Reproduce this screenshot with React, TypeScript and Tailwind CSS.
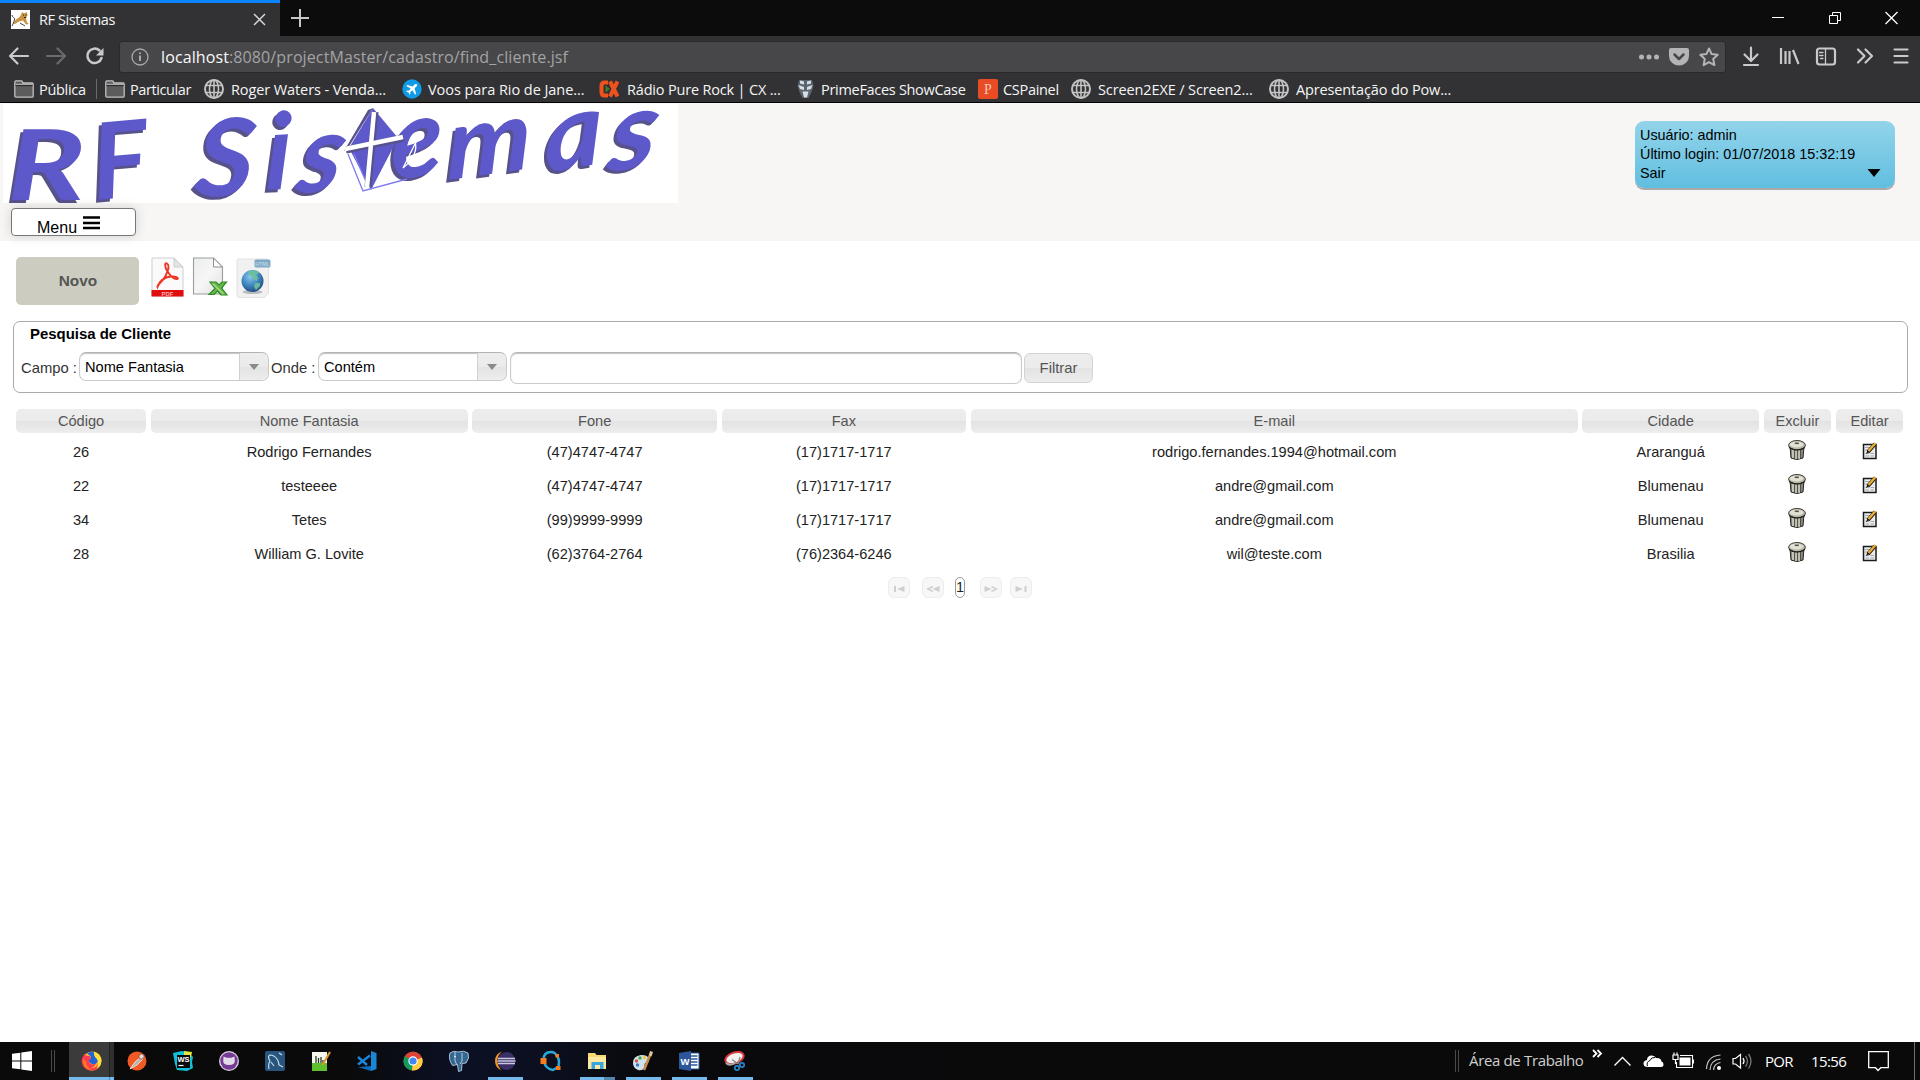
import React from "react";

type Kids = { children: React.ReactNode };

const ui = "font-['Open_Sans',sans-serif]";

/* ---------- Browser chrome icons ---------- */

const Globe = () => (
  <svg width="20" height="20" viewBox="0 0 20 20" fill="none" stroke="#c3c3c4" strokeWidth="1.6" className="shrink-0">
    <circle cx="10" cy="10" r="9" strokeWidth="2" />
    <ellipse cx="10" cy="10" rx="4.5" ry="9" />
    <path d="M10 1v18M2 6.5h16M2 13.5h16" />
  </svg>
);

const Folder = () => (
  <svg width="20" height="18" viewBox="0 0 20 18" className="shrink-0">
    <path d="M.8 16V2.2C.8 1.3 1.3.8 2 .8h5.200c.7 0 1 .3 1.200.9l.4 1.300h9.200c.8 0 1.200.4 1.200 1.200V16c0 .8-.4 1.200-1.200 1.200H2c-.8 0-1.200-.4-1.200-1.200z" fill="#5c5c5d" stroke="#c0c0c0" strokeWidth="1.3" />
    <path d="M1.500 5.500h17" stroke="#2c2c2e" strokeWidth="1.400" />
    <path d="M1.500 4.300h17" stroke="#c0c0c0" strokeWidth="1" />
  </svg>
);

const Plane = () => (
  <svg width="20" height="20" viewBox="0 0 20 20" className="shrink-0">
    <circle cx="10" cy="10" r="9.700" fill="#0f9be8" />
    <path d="M14.800 5.200c-.8-.7-1.800-.1-2.500.6l-1.500 1.600-5.500-1.500-1 1 4.400 2.700-2 2.200-1.700-.2-.8.8 2.300 1.100 1.100 2.300.8-.8-.2-1.700 2.200-2 2.700 4.400 1-1-1.500-5.500 1.600-1.500c.7-.7 1.300-1.700.6-2.500z" fill="#fff" />
  </svg>
);

const Cx = () => (
  <svg width="20" height="20" viewBox="0 0 20 20" className="shrink-0">
    <path d="M9 3.500H5.500Q2.500 3.500 2.500 7v6q0 3.500 3 3.500H9" stroke="#f0521e" strokeWidth="4" fill="none" />
    <path d="M11 2.500l7.500 15M18.500 2.500l-7.500 15" stroke="#f0521e" strokeWidth="4" />
    <path d="M6.500 6.500l4.500 3.500-4.500 3.500z" fill="#3f7d2c" />
  </svg>
);

const Prime = () => (
  <svg width="17" height="20" viewBox="0 0 17 20" className="shrink-0">
    <path d="M2 1h13l1.500 6-2 6-3 6h-6l-3-6-2-6z" fill="#5a6570" />
    <path d="M3 1.500l4 1v3l-4-1zM14 1.500l-4 1v3l4-1zM1.500 6L7 8v3L3 10zM15.500 6L10 8v3l4-1zM5.500 12.500h6l-1.500 6H7z" fill="#d8dfe6" />
  </svg>
);

const PBox = () => (
  <span className="flex h-5 w-5 shrink-0 items-center justify-center rounded-[2px] bg-[#e94b25] font-['Liberation_Serif',serif] text-[14px] text-[#f8c9b8]">P</span>
);

const Tomcat = () => (
  <svg width="19" height="19" viewBox="0 0 19 19">
    <path d="M0 0h19v19H0z" fill="#fff" />
    <path d="M10 5l1-3 2 1.500 2.500-1.500 1 3-1.500 3.500 1 4 2 1.500-3 .5-3-4-4 1-4 2.500-2-.5 3-4 3-2z" fill="#c99440" />
    <path d="M1 5c1 4 3 1.500 2.500 5L2 14l-1 2M9 13l5 3" stroke="#333" strokeWidth=".9" fill="none" />
    <path d="M12 5h1M14.500 5h1M13 7.500h2" stroke="#222" strokeWidth="1" />
  </svg>
);

const TabBar = () => (
  <div className="flex h-9 bg-[#0c0c0c]">
    <div className="flex w-[280px] items-center border-t-[3px] border-[#0a84ff] bg-[#323234] pl-[11px] pr-3.5">
      <Tomcat />
      <span className="ml-[9px] flex-1 text-[14.500px] tracking-[-0.4px] text-[#f5f5f6]">RF Sistemas</span>
      <svg width="13" height="13" viewBox="0 0 13 13" stroke="#d7d7d8" strokeWidth="1.500"><path d="M1 1l11 11M12 1L1 12" /></svg>
    </div>
    <div className="flex flex-1 items-center pl-[11px]">
      <svg width="18" height="18" viewBox="0 0 18 18" stroke="#c8c8c8" strokeWidth="2"><path d="M9 0v18M0 9h18" /></svg>
    </div>
    <svg width="150" height="36" viewBox="0 0 150 36" fill="none" stroke="#fff" strokeWidth="1" className="mr-0.5">
      <path d="M4 17.500h12" />
      <path d="M61.500 15.500h8v8h-8zM64.500 15v-2.500h8v8H70" />
      <path d="M117.500 12l12 12M129.500 12l-12 12" strokeWidth="1.300" />
    </svg>
  </div>
);

const NavBar = () => (
  <div className="flex h-[41px] items-center bg-[#323234]">
    <svg width="119" height="41" viewBox="0 0 119 41" fill="none" strokeWidth="2.200" strokeLinecap="round" strokeLinejoin="round">
      <path d="M28 20H10M17.500 12.500L10 20l7.500 7.500" stroke="#c9c9ca" />
      <path d="M47 20h18M57.500 12.500L65 20l-7.500 7.500" stroke="#6b6b6d" />
      <path d="M99.500 14.500A7.200 7.200 0 1 0 101.500 22" stroke="#c9c9ca" strokeWidth="2.500" />
      <path d="M103.500 12v7.500h-7.500z" fill="#c9c9ca" />
    </svg>
    <div className={`flex h-[32px] w-[1607px] items-center rounded-[3px] border border-[#2a2a2c] bg-[#474749] pl-[11px] pr-[6px] ${ui}`}>
      <svg width="18" height="18" viewBox="0 0 18 18" fill="none" stroke="#a9a9ab" strokeWidth="1.300">
        <circle cx="9" cy="9" r="8" /><path d="M9 7.500v5.500M9 4.500v1.600" strokeWidth="2" />
      </svg>
      <span className="ml-[12px] flex-1 whitespace-nowrap text-[16px] tracking-[0.110px] text-[#a3a3a5]"><span className="text-[#f9f9fa]">localhost</span>:8080/projectMaster/cadastro/find_cliente.jsf</span>
      <svg width="84" height="30" viewBox="0 0 84 30" fill="#b4b4b6">
        <circle cx="6.500" cy="15" r="2.500" /><circle cx="14" cy="15" r="2.500" /><circle cx="21.500" cy="15" r="2.500" />
        <path d="M36 6h16q2 0 2 2v6a10 9.500 0 0 1-20 0V8q0-2 2-2z" />
        <path d="M39.500 12.500l4.500 4.500 4.500-4.500" fill="none" stroke="#474749" strokeWidth="2.500" strokeLinecap="round" strokeLinejoin="round" />
        <path d="M74 6.500l2.600 5.600 6.100.7-4.500 4.200 1.200 6.100-5.400-3-5.400 3 1.200-6.100-4.500-4.200 6.100-.7z" fill="none" stroke="#b4b4b6" strokeWidth="2" strokeLinejoin="round" />
      </svg>
    </div>
    <svg width="194" height="41" viewBox="0 0 194 41" fill="none" stroke="#c9c9ca" strokeWidth="2.200" strokeLinecap="round" strokeLinejoin="round">
      <path d="M25 11.500v13M18.500 18.500L25 25l6.500-6.500M18 29h14" />
      <path d="M55 12v16M59.500 15v13M63.500 15v13M67 14l5.500 14" strokeWidth="2.200" strokeLinecap="butt" />
      <rect x="91" y="12.500" width="18" height="16" rx="2.500" />
      <path d="M99.500 13v15M93.500 16.500h3.500M93.500 19.500h3.500M94.500 22.500h2.500" strokeWidth="1.300" />
      <path d="M132 13.500l6.500 6.500-6.500 6.500M139.500 13.500l6.500 6.500-6.500 6.500" />
      <path d="M168.500 13.500h13M168.500 20h13M168.500 26.500h13" />
    </svg>
  </div>
);

const Mark = ({ icon, width, gap, text, track }: { icon: React.ReactNode; width: string; gap: string; text: string; track?: string }) => (
  <div className={`flex items-center ${width}`}>
    {icon}
    <span className={`whitespace-nowrap pt-px ${gap} ${track ?? "tracking-[-0.3px]"}`}>{text}</span>
  </div>
);

const Bookmarks = () => (
  <div className={`flex h-[26px] items-center border-b border-black bg-[#323234] pb-px pl-[14px] text-[14.500px] text-[#f5f5f6] ${ui}`}>
    <Mark icon={<Folder />} width="w-[82px]" gap="ml-[5px]" text="Pública" />
    <div className="h-5 w-[9px] border-l border-[#6a6a6c]" />
    <Mark icon={<Folder />} width="w-[99px]" gap="ml-[5px]" text="Particular" track="tracking-[-0.4px]" />
    <Mark icon={<Globe />} width="w-[198px]" gap="ml-[7px]" text="Roger Waters - Venda..." track="tracking-[-0.100px]" />
    <Mark icon={<Plane />} width="w-[197px]" gap="ml-[6px]" text="Voos para Rio de Jane..." track="tracking-[-0.050px]" />
    <Mark icon={<Cx />} width="w-[198px]" gap="ml-[8px]" text="Rádio Pure Rock | CX ..." track="tracking-[-0.180px]" />
    <Mark icon={<Prime />} width="w-[181px]" gap="ml-[7px]" text="PrimeFaces ShowCase" />
    <Mark icon={<PBox />} width="w-[93px]" gap="ml-[5px]" text="CSPainel" />
    <Mark icon={<Globe />} width="w-[198px]" gap="ml-[7px]" text="Screen2EXE / Screen2..." track="tracking-[-0.120px]" />
    <Mark icon={<Globe />} width="w-[190px]" gap="ml-[7px]" text="Apresentação do Pow..." track="tracking-[-0.140px]" />
  </div>
);

/* ---------- Page header ---------- */

const letters = [
  { c: "R", t: "translate(4 96) scale(1.330 1)", s: 98 },
  { c: "F", t: "translate(92 96) rotate(-5) scale(1 1)", s: 106 },
  { c: "S", t: "translate(190 92) skewX(-5) scale(1.050 1)", s: 108 },
  { c: "i", t: "translate(262 86) rotate(-3) skewX(-4)", s: 106 },
  { c: "s", t: "translate(291 89) rotate(-3) skewX(-14)", s: 108 },
  { c: "e", t: "translate(388 77) rotate(-10) skewX(-10)", s: 108 },
  { c: "m", t: "translate(444 76) rotate(-8) skewX(-8) scale(1.100 1)", s: 98 },
  { c: "a", t: "translate(542 69) rotate(-10) skewX(-10) scale(1.100 1)", s: 102 },
  { c: "s", t: "translate(603 68) rotate(-8) skewX(-16) scale(1.120 1)", s: 106 },
];

const Letters = ({ color }: { color: string }) => (
  <g fill={color} fontFamily="Lato, sans-serif" fontStyle="italic" fontWeight="700">
    {letters.map((l, i) => (
      <text key={i} transform={l.t} fontSize={l.s}>{l.c}</text>
    ))}
  </g>
);

const Logo = () => (
  <svg width="675" height="99" viewBox="0 0 675 99" className="ml-[3px] mt-px overflow-visible bg-white">
    <g transform="translate(-3 3)"><Letters color="#57528a" /></g>
    <Letters color="#5d59cb" />
    <path d="M370 4l25 30-27 52-22-42z" fill="#5d59cb" />
    <path d="M370 4l-5 2-24 41 4-3z" fill="#57528a" />
    <path d="M345 50l15 37 44-12M351 50l13 30" fill="none" stroke="#7f7cf0" strokeWidth="1.300" />
    <path d="M372 8l-7 75M343 46l58-12" stroke="#57528a" strokeWidth="7" fill="none" />
    <path d="M371 8l-7 75M342 45l58-12" stroke="#fff" strokeWidth="4.500" fill="none" />
    <path d="M412 37q4 14-12 27l14-28" fill="none" stroke="#fff" strokeWidth="1.300" />
  </svg>
);

const Header = () => (
  <header className="flex h-[138px] justify-between bg-[#f7f6f5] text-black">
    <div className="flex flex-col">
      <Logo />
      <button className="ml-[11px] mt-[5px] flex h-[28px] w-[125px] items-start rounded-[4px] border border-[#777] bg-white pl-[25px] pt-[7px] text-[16px] leading-6 shadow-[0_0_12px_rgba(0,0,0,0.15)]">
        <span>Menu</span>
        <svg width="18" height="14" viewBox="0 0 18 14" className="ml-[6px]"><path d="M0 1.500h17M0 7h17M0 12h17" stroke="#000" strokeWidth="2.600" /></svg>
      </button>
    </div>
    <div className="mr-[25px] mt-[18px] flex h-[67px] w-[260px] items-end justify-between rounded-[9px] bg-linear-to-b from-[#92d4ea] to-[#60bee0] pb-[5px] pl-[5px] pr-[14px] shadow-[0_2px_0_#aaa]">
      <div className="text-[14.400px] leading-[19px]">
        <p>Usuário: admin</p>
        <p>Último login: 01/07/2018 15:32:19</p>
        <p>Sair</p>
      </div>
      <svg width="14" height="8" viewBox="0 0 14 8" className="mb-[6px]"><path d="M.5 0h13L7 8z" /></svg>
    </div>
  </header>
);

/* ---------- Toolbar ---------- */

const PdfIcon = () => (
  <svg width="33" height="41" viewBox="0 0 33 41">
    <path d="M1 1h22l9 9v29H1z" fill="#fafafa" stroke="#cfcfcf" />
    <path d="M23 1v9h9z" fill="#e4e4e4" stroke="#c4c4c4" strokeWidth=".8" />
    <path d="M.5 33h32v6.500H.5z" fill="#e00f0f" />
    <path d="M6.500 30c-1-2 5-5 8-11s4-11 1.500-12.500-2.500 3.500.5 8 7 8 9.500 7.500-1-3-6-2.500-11 3-13.500 10.500z" fill="none" stroke="#ee3524" strokeWidth="1.900" />
    <text x="16.500" y="38.500" textAnchor="middle" fontSize="6" fontWeight="700" fontFamily="Liberation Sans, sans-serif" fill="#ffb0b0">PDF</text>
  </svg>
);

const XlsIcon = () => (
  <svg width="37" height="41" viewBox="0 0 37 41">
    <defs><linearGradient id="sheet" x1="0" y1="0" x2="1" y2="1"><stop offset="0" stopColor="#eceded" /><stop offset=".5" stopColor="#f6f6f6" /><stop offset="1" stopColor="#dedfe0" /></linearGradient></defs>
    <path d="M1.500 1h20l9 9v27h-29z" fill="url(#sheet)" stroke="#9a9c9e" strokeWidth="1.100" />
    <path d="M21.500 1v9h9z" fill="#fbfbfb" stroke="#8d9092" strokeWidth="1" />
    <path d="M18 25h6l3 3 3-3h4.500l-5 6 5.500 7h-6l-3.500-4-3.500 3.500h-5l6-6z" fill="#67b84a" stroke="#2f8a22" strokeWidth="1.200" />
    <path d="M20.500 26.500l11 10.500" stroke="#a5d98c" strokeWidth="1.500" />
  </svg>
);

const HtmlIcon = () => (
  <svg width="36" height="42" viewBox="0 0 36 42">
    <defs><radialGradient id="ocean" cx=".4" cy=".3" r=".8"><stop offset="0" stopColor="#8cc9ee" /><stop offset=".5" stopColor="#3f86bf" /><stop offset="1" stopColor="#1b3f70" /></radialGradient></defs>
    <path d="M2 1h29q1.500 0 1.500 1.500V35l-4 4.500H3q-2 0-2-2V2z" fill="#f1f1f2" stroke="#e2e2e2" />
    <ellipse cx="16.500" cy="34" rx="10" ry="2" fill="#b9bcc0" />
    <circle cx="16.500" cy="23" r="11" fill="url(#ocean)" />
    <path d="M13 13q6-2 10 1l-1 2-3 1 3 2-1 4-4-2-2-3-3-3zM19 25l5 0 0 3-4 4-2-3z" fill="#6fc09a" opacity=".9" />
    <rect x="18.500" y="1.500" width="16" height="8" rx="1.500" fill="#7fa9c4" />
    <text x="26.500" y="7.500" textAnchor="middle" fontSize="5.200" fontWeight="700" fontFamily="Liberation Sans, sans-serif" fill="#b9d2e2">HTML</text>
  </svg>
);

const Toolbar = () => (
  <div className="flex pl-4 pt-4">
    <button className="h-12 w-[123px] rounded-[5px] bg-[#cdccc0] pl-px text-[15.400px] font-bold text-[#555]">Novo</button>
    <div className="ml-[12px] flex">
      <PdfIcon />
      <div className="ml-[8px]"><XlsIcon /></div>
      <div className="ml-[7px] mt-px"><HtmlIcon /></div>
    </div>
  </div>
);

/* ---------- Search panel ---------- */

const glossy = "bg-[linear-gradient(#ededed_0%,#ebebeb_50%,#e3e3e3_51%,#ededed_100%)]";

const Select = ({ value, className }: { value: string; className: string }) => (
  <div className={`flex h-[29px] overflow-hidden rounded-[7px] border border-[#cbcbcb] border-t-[#b4b4b4] bg-white shadow-[inset_0_1px_1px_#c4c4c4] ${className}`}>
    <span className="flex-1 pl-[5px] pt-px text-[14.600px] leading-[27px] text-black">{value}</span>
    <span className={`flex w-[29px] items-center justify-center border-l border-[#d0d0d0] ${glossy}`}>
      <svg width="10" height="6" viewBox="0 0 10 6"><path d="M0 0h10L5 6z" fill="#8a8a8a" /></svg>
    </span>
  </div>
);

const Search = () => (
  <section className="ml-[13px] mt-4 h-[72px] w-[1895px] rounded-[7px] border border-[#aaa] text-[#333]">
    <h2 className="pl-4 pt-[3px] text-[14.950px] font-bold leading-[18px] text-black">Pesquisa de Cliente</h2>
    <div className="mt-[9px] flex pl-[7px] text-[14.800px]">
      <span className="w-[58px] whitespace-nowrap pt-px leading-[30px]">Campo :</span>
      <Select value="Nome Fantasia" className="w-[190px]" />
      <span className="ml-[2px] w-[47px] whitespace-nowrap pt-px leading-[30px]">Onde :</span>
      <Select value="Contém" className="w-[189px]" />
      <div className="ml-[3px] h-8 w-[512px] rounded-[7px] border border-[#cbcbcb] border-t-[#b4b4b4] bg-white shadow-[inset_0_1px_1px_#c4c4c4]" />
      <button className={`ml-[2px] mt-px h-[30px] w-[69px] rounded-[6px] border border-[#d3d3d3] pt-px text-[#555] ${glossy}`}>Filtrar</button>
    </div>
  </section>
);

/* ---------- Results table ---------- */

const Trash = () => (
  <svg width="18" height="20" viewBox="0 0 18 20">
    <path d="M2 6h14l-1 12q-6 3-12 0z" fill="#8b897e" stroke="#26251f" strokeWidth="1" />
    <path d="M5 8v10M8 9v10M11 9v10" stroke="#d8d6ca" strokeWidth="1.500" />
    <path d="M6.600 9v10M9.600 9v10M12.500 8v10.500" stroke="#4b4a42" strokeWidth=".9" />
    <ellipse cx="9" cy="5.200" rx="8.400" ry="4.700" fill="#b9b7a8" stroke="#2b2a25" strokeWidth=".9" />
    <ellipse cx="8.500" cy="4.500" rx="6.800" ry="3" fill="#e2e0d3" />
    <path d="M6.800 2.500h4v1.600h-4z" fill="#55534b" />
    <path d="M1 7.500q8 5 16 0" stroke="#1f1e1a" fill="none" strokeWidth="1.100" />
  </svg>
);

const Edit = () => (
  <svg width="16" height="18" viewBox="0 0 16 18">
    <rect x="1.500" y="2.500" width="12.500" height="14" fill="#e9ebee" stroke="#1a1a1a" strokeWidth="1.500" />
    <path d="M3 5.500h5M3 8h3M3.500 11.500h3.500M8.500 11.500H12M3.500 14h3.500M8.500 14H12" stroke="#a5a8ad" strokeWidth="1.200" />
    <path d="M6 10L13 2" stroke="#2a1d08" strokeWidth="3.800" />
    <path d="M6.500 9L13.500 1" stroke="#e8b03a" strokeWidth="2.400" />
    <path d="M4 12l1.300-3.200 1.800 1.500z" fill="#111" />
  </svg>
);

const cols = "grid grid-cols-[130px_317px_244.500px_244.500px_607px_176.500px_67.500px_67.500px] gap-x-[4.700px] pl-4";

const heads = ["Código", "Nome Fantasia", "Fone", "Fax", "E-mail", "Cidade", "Excluir", "Editar"];
const rows = [
  ["26", "Rodrigo Fernandes", "(47)4747-4747", "(17)1717-1717", "rodrigo.fernandes.1994@hotmail.com", "Araranguá"],
  ["22", "testeeee", "(47)4747-4747", "(17)1717-1717", "andre@gmail.com", "Blumenau"],
  ["34", "Tetes", "(99)9999-9999", "(17)1717-1717", "andre@gmail.com", "Blumenau"],
  ["28", "William G. Lovite", "(62)3764-2764", "(76)2364-6246", "wil@teste.com", "Brasilia"],
];

const Table = () => (
  <section className="mt-4 text-center text-[14.600px] text-[#222]">
    <div className={cols}>
      {heads.map((h) => (
        <div key={h} className={`h-6 rounded-[5px] leading-6 text-[#555] ${glossy}`}>{h}</div>
      ))}
    </div>
    <div className="pt-[3px]">
      {rows.map((r, i) => (
        <div key={i} className={`${cols} h-[34px] items-center`}>
          {r.map((c, j) => <span key={j}>{c}</span>)}
          <span className="flex justify-center pb-[6px]"><Trash /></span>
          <span className="flex justify-center pb-[5px] pl-px"><Edit /></span>
        </div>
      ))}
    </div>
  </section>
);

const Page = ({ children, className }: Kids & { className: string }) => (
  <span className={`flex h-[21px] w-[22px] items-center justify-center rounded-[6px] border border-[#ededed] bg-[#f7f7f7] pt-0.5 ${className}`}>
    <svg width="14" height="8" viewBox="0 0 14 8" fill="#cfcfcf" stroke="none">{children}</svg>
  </span>
);

const Paginator = () => (
  <nav className="mt-[5px] flex pl-[888px]">
    <Page className=""><path d="M2 1h2v6H2zM12.500 1v6L5 4z" /></Page>
    <Page className="ml-[12px]"><path d="M13.500 1v6L6.500 4zM7 .8v1.600L3.300 4 7 5.600v1.600L0 4z" /></Page>
    <span className="ml-[11px] flex h-[21px] w-[10px] items-center justify-center rounded-[5px] border border-[#999] bg-white text-[14.500px] text-[#222]">1</span>
    <Page className="ml-[15px]"><path d="M.5 1v6l7-3zM7.500 .8v1.600L11 4 7.500 5.600v1.600L14 4z" /></Page>
    <Page className="ml-[8px]"><path d="M1.500 1v6L9 4zM10.500 1h2v6h-2z" /></Page>
  </nav>
);

/* ---------- Taskbar ---------- */

const I = ({ children }: Kids) => <svg width="22" height="22" viewBox="0 0 22 22">{children}</svg>;

const apps: { bar: string; icon: React.ReactNode }[] = [
  { bar: "", icon: <I><circle cx="11" cy="11" r="9.500" fill="#ffc02e" /><path d="M11 20.500A9.500 9.500 0 0 1 2.500 5.500L4.500 3v2.500L9 6l1 3-2 3c2 3 5 3 7 1-1 4-4 5-6 5 6 1 8-3 8-7 2 4 1 9.500-6 9.500z" fill="#ff3b4f" /><path d="M6 3.500Q11 0 15 4q3 3 2 7-2 4-6 3-4-2-3-4l2-1.500L9.500 6z" fill="#2462d8" /><path d="M13 1.500q7 2.500 7.500 9-1 6-5 8 3-6 0-10-3-2-2.500-7z" fill="#ffdf3a" /><path d="M2 9q-1 10 9 11.500-6-4-6-9z" fill="#ff7a1c" /></I> },
  { bar: "", icon: <I><circle cx="11" cy="11" r="9.500" fill="#f15a24" /><path d="M4 19l5-7 6-5 2 2-6 6z" fill="#b9b4ae" stroke="#fff" strokeWidth=".7" /><circle cx="15.500" cy="6.500" r="2.600" fill="#ddd" stroke="#8c3a1b" strokeWidth=".7" /></I> },
  { bar: "", icon: <I><path d="M1 3l9-2 6 1 5 5-1 5 1 6-6 3-10-1-2-6z" fill="#12bfd8" /><path d="M12 1l8 1-1 5-7-1z" fill="#e4e93b" /><path d="M5 5h13v13H5z" fill="#0b0b0b" /><text x="11.500" y="12" fontSize="7.500" fontWeight="700" textAnchor="middle" fill="#fff" fontFamily="Liberation Sans, sans-serif">WS</text><path d="M6.500 15.500h5" stroke="#fff" strokeWidth="1.200" /></I> },
  { bar: "", icon: <I><circle cx="11" cy="11" r="10" fill="#ddd3e2" /><circle cx="11" cy="11" r="8.700" fill="#743a96" /><path d="M5.500 6.500l3 1.200h5l3-1.200.3 4.500q0 4-5.800 4t-5.800-4z" fill="#e3dce8" /></I> },
  { bar: "", icon: <I><rect x="1" y="1" width="20" height="20" rx="2" fill="#27557d" /><path d="M5 19q-1-5 1-8-3-5 0-6 4 0 7 4 2 3 2 6l4 2M15 3l3 2M7 12l3 4" stroke="#c9dcea" strokeWidth="1.200" fill="none" /></I> },
  { bar: "", icon: <I><path d="M2 2h15v19H2z" fill="#f6f8ef" /><path d="M2 13h15v8H2z" fill="#5fbf2e" /><path d="M6 6v7M8.500 8v5M11 7v6M13 10v3" stroke="#2a3a22" strokeWidth="1.300" /><path d="M12.500 15L20 2" stroke="#d59a35" strokeWidth="2.200" /></I> },
  { bar: "", icon: <I><path d="M15 1l5.500 2v16L15 21z" fill="#1b86d8" /><path d="M15 16v5l-13-4z" fill="#0d6cb8" /><path d="M2 7l9 8M2 14.500l12-9" stroke="#1b86d8" strokeWidth="2.400" fill="none" /></I> },
  { bar: "", icon: <I><circle cx="11" cy="11" r="9.500" fill="#db4437" /><path d="M11 11L2.800 6.200A9.500 9.500 0 0 0 10 20.500z" fill="#0f9d58" /><path d="M11 11L20 7.500a9.500 9.500 0 0 1-10 13z" fill="#ffcd40" /><path d="M11 6.700h8.500L20 8H11z" fill="#db4437" /><circle cx="11" cy="11" r="4.700" fill="#fff" /><circle cx="11" cy="11" r="3.600" fill="#4285f4" /></I> },
  { bar: "", icon: <I><path d="M2 3q4-3 8-1 6-2 10 1 2 5-2 10l-4 .5-.5 7-3 1-1-7-5 1Q0 9 2 3z" fill="#336791" stroke="#a9bfd0" strokeWidth="1" /><path d="M7 2v9l2 4M14 3v8l-2 3" stroke="#b9ccd9" strokeWidth="1" fill="none" /><circle cx="7" cy="6.500" r=".8" fill="#fff" /></I> },
  { bar: "bg-[#76b9ed]", icon: <I><path d="M8 1.500Q1 4 1 11t7 9.500Q3.500 17 3.500 11T8 1.500z" fill="#f7941e" /><circle cx="12.500" cy="11" r="9" fill="#3a2f67" /><path d="M4 8.500h17M3.500 11h18M4 13.500h17" stroke="#c9c6df" strokeWidth="1.400" /></I> },
  { bar: "", icon: <I><path d="M3.500 10q0-8 7.500-8 4 0 6 4M4 12q2 7 9 8l5-3M17 6q3 4 1.500 10" stroke="#28a7d8" strokeWidth="2.600" fill="none" /><path d="M.5 8h6v6h-6zM15.500 4h3.500v3.500h-3.500zM16 16h4.500v4H16z" fill="#f47b20" /></I> },
  { bar: "bg-[linear-gradient(90deg,#76b9ed_68%,#5486ab_68%)]", icon: <I><path d="M2 3h7l1.500 2H20v14H2z" fill="#f7d774" /><path d="M2 7h18v12H2z" fill="#fce79f" /><path d="M5.500 19v-7h12v7H14v-4H9v4z" fill="#37a5e0" /></I> },
  { bar: "bg-[#76b9ed]", icon: <I><path d="M1 13q0-7 8-8 8 0 8 5 0 3-4 3-1 2 0 4-2 4-7 3-5-2-5-7z" fill="#cfe3ef" /><circle cx="4.500" cy="11" r="1.700" fill="#e0533d" /><circle cx="8" cy="8" r="1.700" fill="#48a847" /><circle cx="12.500" cy="7.500" r="1.600" fill="#f4c430" /><circle cx="5.500" cy="15" r="1.700" fill="#3b79c9" /><path d="M12 20L18.500 4" stroke="#c98b4a" strokeWidth="2.600" /><path d="M17 5l1-4 3 1-1.500 4.500z" fill="#e4c9a0" /></I> },
  { bar: "bg-[#76b9ed]", icon: <I><path d="M12 3h9v16h-9z" fill="#fff" stroke="#2b579a" /><path d="M13 6h6.500M13 9h6.500M13 12h6.500M13 15h6.500" stroke="#2b579a" strokeWidth="1.300" /><path d="M1 3l12-2v20L1 19z" fill="#2b579a" /><text x="7" y="14.500" fontSize="9.500" fontWeight="700" textAnchor="middle" fill="#fff" fontFamily="Liberation Sans, sans-serif">W</text></I> },
  { bar: "bg-[#76b9ed]", icon: <I><ellipse cx="10.500" cy="8" rx="9.500" ry="5.500" fill="#f4f0f0" stroke="#d8363a" strokeWidth="2" transform="rotate(-20 10.500 8)" /><path d="M2 13q4 4 10-1" stroke="#a9a9a9" strokeWidth="2" fill="none" /><path d="M8 9.500l6 4.500M16 7l-2 7" stroke="#888" strokeWidth="1.200" /><circle cx="13" cy="18" r="2.200" fill="none" stroke="#2585c9" strokeWidth="1.700" /><circle cx="18" cy="15" r="2.200" fill="none" stroke="#2585c9" strokeWidth="1.700" /></I> },
];

const Grip = ({ className }: { className: string }) => <div className={`h-[22px] w-1 border-x border-[#4a4a4a] ${className}`} />;

const Taskbar = () => (
  <footer className={`flex h-[38px] items-center bg-[linear-gradient(90deg,#0a0a0a_0%,#0a0a0a_18%,#0b1024_24%,#0b0f20_28%,#0a0a0c_34%,#0a0a0a_100%)] text-[#e6e6e6] ${ui}`}>
    <svg width="20" height="20" viewBox="0 0 20 20" fill="#fff" className="ml-3"><path d="M0 2.800L8.300 1.700v7.800H0zM9.300 1.500L20 0v9.500H9.300zM0 10.500h8.300v7.800L0 17.200zM9.300 10.500H20V20L9.300 18.500z" /></svg>
    <Grip className="ml-[19px]" />
    <div className="ml-[14px] flex h-full">
      {apps.map((a, i) => (
        <div key={i} className={i === 0 ? "flex h-full w-[45px] flex-col bg-[linear-gradient(90deg,#3b3b3b_89%,#232323_89%,#232323_92%,#303030_92%)]" : "flex h-full w-[46px] flex-col items-center"}>
          <div className="flex flex-1 items-center justify-center pt-[2px]">{a.icon}</div>
          <div className={i === 0 ? "h-[3px] w-full bg-[linear-gradient(90deg,#76b9ed_89%,#5486ab_89%,#5c96c2_92%,#76b9ed_92%)]" : `h-[3px] w-[35px] ${a.bar}`} />
        </div>
      ))}
    </div>
    <div className="flex-1" />
    <Grip className="mr-[10px]" />
    <span className="w-[123px] whitespace-nowrap pb-px text-[15px] tracking-[-0.350px] text-[#cfcfcf]">Área de Trabalho</span>
    <svg width="164" height="38" viewBox="0 0 164 38" fill="none" stroke="#fff" strokeWidth="1.300">
      <path d="M1 8l3.500 3.500L1 15M5.500 8L9 11.500 5.500 15" strokeWidth="1.800" />
      <path d="M22.500 23.500l8-8 8 8" />
      <path d="M56 25q-4.500 0-4.500-3.500 0-3 3.500-3.500 0-4 4-4.500 3.500-.5 5 2.500 5-.5 5.500 3.500 2 .5 2 3 0 2.500-2.500 2.500z" fill="#fff" stroke="none" />
      <path d="M55.500 24q-1.500-4 2.500-5.500 1-3.500 5-3" stroke="#0a0a0a" strokeWidth="1" />
      <path d="M87.500 15.500h11v8h-11z" fill="#fff" stroke="none" /><path d="M84.500 20v5.500h16v-12H88M101.500 17.500v4" strokeWidth="1.100" />
      <path d="M81 13v4.500h5V13zM82 10.500V13M85 10.500V13M83.500 18v4" strokeWidth="1.200" fill="#0a0a0a" />
      <path d="M114.500 27Q115 14 128.500 13M118 28q.5-10 10.500-11M121.500 28q.5-6.500 7-7.500" strokeWidth="1.200" stroke="#c4c4c4" /><circle cx="127" cy="26" r="2" fill="#fff" stroke="none" />
      <path d="M141 16.500h2.500l5-4v13.500l-5-4H141z" strokeWidth="1.200" />
      <path d="M151 16q2 3 0 6" /><path d="M153.500 14q4 5 0 10.500M156.500 12q5 7 0 14.500" stroke="#777" />
    </svg>
    <span className="ml-[9px] w-[46px] text-[15px] tracking-[-0.7px] text-white">POR</span>
    <span className="w-[57px] text-[15px] tracking-[-0.6px] text-white">15:56</span>
    <svg width="21" height="21" viewBox="0 0 21 21" fill="none" stroke="#fff" strokeWidth="1.300"><path d="M.7.7h19.600v16h-7.500L10 19.500l-2.500-2.800H.7z" /></svg>
    <div className="ml-[25px] mr-[5px] h-full w-px bg-[#6f6f6f]" />
  </footer>
);

export default function App() {
  return (
    <div className="flex h-[1080px] w-[1920px] flex-col overflow-hidden bg-white font-['Liberation_Sans',Arial,sans-serif]">
      <div className={ui}>
        <TabBar />
        <NavBar />
        <Bookmarks />
      </div>
      <Header />
      <main className="flex-1">
        <Toolbar />
        <Search />
        <Table />
        <Paginator />
      </main>
      <Taskbar />
    </div>
  );
}
